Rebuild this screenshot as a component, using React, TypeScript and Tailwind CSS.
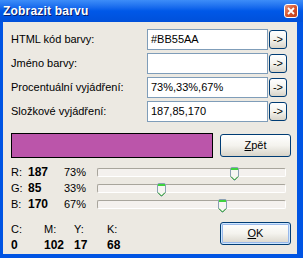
import React from "react";

const font = { fontFamily: '"Liberation Sans", Arial, sans-serif' };

function Thumb() {
  return (
    <svg width="9" height="14" viewBox="0 0 9 14" className="block">
      <path d="M0.5 2 Q0.5 0.5 2 0.5 H7 Q8.5 0.5 8.5 2 V9.5 L4.5 13.5 L0.5 9.5 Z" fill="#F6F6F2" stroke="#8CA0B4" />
      <rect x="1" y="1" width="7" height="2" fill="#3ED23E" />
      <path d="M1 9.5 L4.5 13 L8 9.5" fill="none" stroke="#21A121" strokeWidth="1" />
    </svg>
  );
}

function XpButton({ children, className = "", def = false }: { children: React.ReactNode; className?: string; def?: boolean }) {
  return (
    <div
      className={
        "flex items-center justify-center rounded-[3px] border border-[#003C74] bg-gradient-to-b from-[#FFFFFF] via-[#F4F3EE] to-[#D8D4C9] text-[11px] text-black " +
        (def ? "shadow-[inset_0_0_0_1px_#CEE7FF,inset_0_0_0_2px_#98B8EA] " : "") +
        className
      }
    >
      {children}
    </div>
  );
}

function Row({ label, value }: { label: string; value: string }) {
  return (
    <div className="flex h-[21px] items-center">
      <div className="w-[136px] text-[11px] text-black">{label}</div>
      <div className="flex h-[21px] w-[121px] items-center border border-[#7F9DB9] bg-white pl-[3px] text-[11px] text-black">
        {value}
      </div>
      <XpButton className="ml-[1px] h-[19px] w-[18px] text-[10px]">-&gt;</XpButton>
    </div>
  );
}

function SliderRow({ ch, val, pct }: { ch: string; val: number; pct: string }) {
  const left = (val / 255) * 181;
  return (
    <div className="flex h-[16px] items-center text-[11px] text-black">
      <div className="w-[17px]">{ch}:</div>
      <div className="w-[36px] text-[12px] font-bold">{val}</div>
      <div className="w-[33px]">{pct}</div>
      <div className="relative h-[16px] w-[189px]">
        <div className="absolute left-0 right-0 top-[4px] h-[9px] rounded-[2px] border-t border-l border-t-[#A8A59C] border-l-[#A8A59C] border-b border-r border-b-white border-r-white bg-[#F4F1EE]" />
        <div className="absolute top-[3px]" style={{ left }}>
          <Thumb />
        </div>
      </div>
    </div>
  );
}

export default function App() {
  return (
    <div className="flex h-[258px] w-[303px] flex-col bg-[#0054E3]" style={font}>
      <div className="flex h-[22px] items-center justify-between bg-gradient-to-b from-[#3D8DF8] via-[#0058E8] to-[#0050DA] pl-[3px] pr-[5px]">
        <div className="text-[12px] font-bold tracking-[0.2px] text-white [text-shadow:1px_1px_0_#0A1E6A]">Zobrazit barvu</div>
        <div className="flex h-[14px] w-[14px] items-center justify-center rounded-[3px] border border-white bg-gradient-to-br from-[#E8967A] via-[#D6532D] to-[#C1401C]">
          <svg width="8" height="8" viewBox="0 0 8 8">
            <path d="M1 1 L7 7 M7 1 L1 7" stroke="white" strokeWidth="1.8" />
          </svg>
        </div>
      </div>
      <div className="mb-[4px] ml-[3px] mr-[6px] flex flex-1 flex-col bg-[#ECE9E2] pl-[8px] pr-[6px] pt-[7px]">
        <div className="flex flex-col gap-[3px]">
          <Row label="HTML kód barvy:" value="#BB55AA" />
          <Row label="Jméno barvy:" value="" />
          <Row label="Procentuální vyjádření:" value="73%,33%,67%" />
          <Row label="Složkové vyjádření:" value="187,85,170" />
        </div>
        <div className="mt-[11px] flex items-start">
          <div className="h-[25px] w-[202px] border border-black bg-[#BB55AA]" />
          <XpButton className="ml-[7px] mt-[1px] h-[23px] w-[71px]">
            <span><span className="underline">Z</span>pět</span>
          </XpButton>
        </div>
        <div className="mt-[6px] flex flex-col">
          <SliderRow ch="R" val={187} pct="73%" />
          <SliderRow ch="G" val={85} pct="33%" />
          <SliderRow ch="B" val={170} pct="67%" />
        </div>
        <div className="mt-[9px] flex items-start justify-between">
          <div className="grid grid-cols-[33px_30px_33px_30px] text-[11px] text-black">
            <div className="h-[15px]">C:</div>
            <div className="h-[15px]">M:</div>
            <div className="h-[15px]">Y:</div>
            <div className="h-[15px]">K:</div>
            <div className="text-[12px] font-bold">0</div>
            <div className="text-[12px] font-bold">102</div>
            <div className="text-[12px] font-bold">17</div>
            <div className="text-[12px] font-bold">68</div>
          </div>
          <XpButton def className="mt-[1px] h-[23px] w-[71px]">
            <span><span className="underline">O</span>K</span>
          </XpButton>
        </div>
      </div>
    </div>
  );
}
